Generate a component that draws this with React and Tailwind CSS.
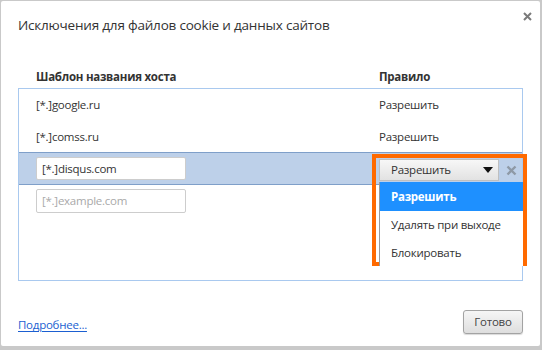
export default function App() {
  const font = { fontFamily: '"Open Sans", "Noto Sans", sans-serif' };

  return (
    <div
      className="w-[542px] h-[350px] bg-[#c9c9c9] pl-px pt-px pr-[2px] pb-[4px] overflow-hidden"
      style={font}
    >
      <div className="relative h-full bg-white rounded-[2px] flex flex-col text-[#333]">
        {/* Close */}
        <svg className="absolute right-[8px] top-[11px]" width="9" height="9" viewBox="0 0 9 9">
          <path d="M1 1l7 7M8 1l-7 7" stroke="#7a7a7a" strokeWidth="2" />
        </svg>

        {/* Title */}
        <h1 className="pl-[17px] pt-[14px] text-[13.5px] tracking-[-0.2px] leading-[20px] text-[#333]">
          Исключения для файлов cookie и данных сайтов
        </h1>

        {/* Column headers */}
        <div className="flex mt-[31px] h-[22px] items-center text-[11.5px] tracking-[-0.25px] font-bold text-[#333]">
          <div className="w-[378px] pl-[35px]">Шаблон названия хоста</div>
          <div>Правило</div>
        </div>

        {/* Table */}
        <div className="mx-[17px] w-[505px] h-[193px] border border-[#a9c9ef] text-[11.5px] tracking-[-0.25px]">
          <div className="flex h-[32px] items-center">
            <div className="w-[360px] pl-[17px]">[*.]google.ru</div>
            <div>Разрешить</div>
          </div>
          <div className="flex h-[31px] items-center">
            <div className="w-[360px] pl-[17px]">[*.]comss.ru</div>
            <div>Разрешить</div>
          </div>
          <div className="flex h-[33px] items-center bg-[#bdd0e9] border-y border-[#7f9fc9]">
            <div className="w-[360px] pl-[17px]">
              <div className="w-[150px] h-[23px] bg-white border border-[#cdcdcd] rounded-[2px] pl-[5px] flex items-center">
                [*.]disqus.com
              </div>
            </div>
          </div>
          <div className="flex h-[32px] items-center">
            <div className="w-[360px] pl-[17px]">
              <div className="w-[150px] h-[24px] bg-white border border-[#cdcdcd] rounded-[2px] pl-[5px] flex items-center text-[#a9a9a9]">
                [*.]example.com
              </div>
            </div>
          </div>
        </div>

        {/* Footer */}
        <div className="mt-auto flex items-center justify-between pl-[17px] pr-[17px] pb-[12px]">
          <a className="mt-[5px] text-[11.5px] tracking-[-0.25px] text-[#1b5fd1] underline underline-offset-2">
            Подробнее...
          </a>
          <button className="w-[60px] h-[24px] border border-[#a3a3a3] rounded-[3px] bg-gradient-to-b from-[#f6f6f6] to-[#dedede] text-[11.5px] tracking-[-0.25px] text-[#444] shadow-[0_1px_1px_rgba(0,0,0,0.15)]">
            Готово
          </button>
        </div>

        {/* Open rule select + dropdown, highlighted */}
        <div className="absolute left-[371px] top-[153px] w-[155px] h-[112px] border-[4px] border-[#ff6a00] text-[11.5px] tracking-[-0.25px]">
          <div className="flex h-[23px] mt-px">
            <div className="ml-[3px] w-[120px] h-[22px] flex items-center justify-between pl-[11px] pr-[5px] bg-gradient-to-b from-[#f7f7f7] to-[#e2e2e2] border border-[#bfbfbf] text-[#333]">
              <span>Разрешить</span>
              <svg width="10" height="6" viewBox="0 0 10 6">
                <path d="M0 0h10L5 6z" fill="#111" />
              </svg>
            </div>
            <div className="flex-1 flex items-center justify-center">
              <svg width="11" height="11" viewBox="0 0 11 11">
                <path d="M1.5 1.5l8 8M9.5 1.5l-8 8" stroke="#8e99a6" strokeWidth="2.4" />
              </svg>
            </div>
          </div>
          <div className="ml-[3px] bg-white border-l border-[#9a9a9a]">
            <div className="h-[29px] flex items-center pl-[11px] bg-[#1e90ff] text-white font-bold">Разрешить</div>
            <div className="h-[28px] flex items-center pl-[11px] text-[#333]">Удалять при выходе</div>
            <div className="h-[27px] flex items-center pl-[11px] text-[#333]">Блокировать</div>
          </div>
        </div>
      </div>
    </div>
  );
}
